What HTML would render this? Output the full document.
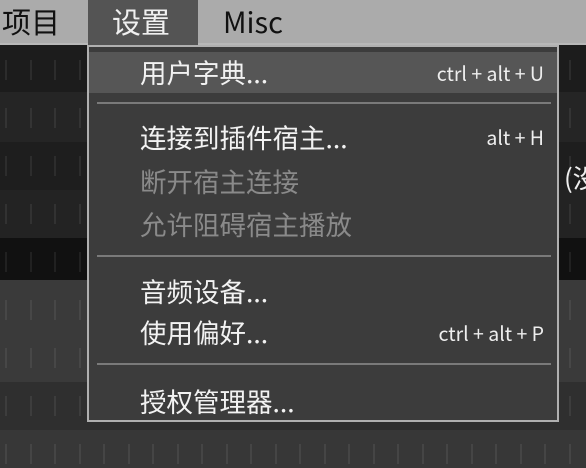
<!DOCTYPE html>
<html><head><meta charset="utf-8"><style>
*{margin:0;padding:0;box-sizing:border-box}
body{width:586px;height:468px;overflow:hidden;background:#222;position:relative;font-family:"Noto Sans CJK SC","Liberation Sans",sans-serif}
.bar{position:absolute;left:0;top:0;width:586px;height:45px;background:#ababab;border-bottom:2px solid #b8b8b8}
.bar span{position:absolute;top:2px;font-size:29px;color:#111;line-height:38px}
.tab{position:absolute;left:88px;top:0;width:110px;height:45px;background:#545454}
.row{position:absolute;left:0;width:586px}
.tk{position:absolute;width:2px;height:20px;background:rgba(255,255,255,0.07)}
.menu{position:absolute;left:87px;top:45px;width:472px;height:377px;background:#3c3c3c;border:2px solid #b0b0b0}
.it{position:absolute;left:51px;font-size:26.5px;color:#f2f2f2;line-height:30px;white-space:nowrap}
.dis{color:#8a8a8a}
.sc{position:absolute;right:13px;font-size:19.5px;color:#eee;line-height:24px}
.sep{position:absolute;left:8px;width:454px;height:2px;background:#7a7a7a}
</style></head><body>
<div class="row" style="top:45px;height:47px;background:#1c1c1c"></div>
<div class="row" style="top:92px;height:50px;background:#252525"></div>
<div class="row" style="top:142px;height:48px;background:#1e1e1e"></div>
<div class="row" style="top:190px;height:48px;background:#232323"></div>
<div class="row" style="top:238px;height:42px;background:#111"></div>
<div class="row" style="top:280px;height:102px;background:#3a3a3a"></div>
<div class="row" style="top:382px;height:48px;background:#2f2f2f"></div>
<div class="row" style="top:430px;height:38px;background:#373737"></div>
<div id="ticks"></div>
<div style="position:absolute;left:564px;top:159px;font-size:26px;color:#eee">(没</div>
<div class="bar"><div class="tab"></div>
<span style="left:2px">项目</span>
<span style="left:112px;color:#f0f0f0">设置</span>
<span style="left:223px">Misc</span></div>
<div class="menu">
<div style="position:absolute;left:0;top:5px;width:468px;height:41px;background:#565656"></div>
<div class="it" style="top:10px">用户字典...</div><div class="sc" style="top:14px">ctrl + alt + U</div>
<div class="sep" style="top:55px"></div>
<div class="it" style="top:75px">连接到插件宿主...</div><div class="sc" style="top:78px">alt + H</div>
<div class="it dis" style="top:119px">断开宿主连接</div>
<div class="it dis" style="top:162px">允许阻碍宿主播放</div>
<div class="sep" style="top:208px"></div>
<div class="it" style="top:229px">音频设备...</div>
<div class="it" style="top:270px">使用偏好...</div><div class="sc" style="top:274px">ctrl + alt + P</div>
<div class="sep" style="top:316px"></div>
<div class="it" style="top:339px">授权管理器...</div>
</div>
<script>
var t=document.getElementById('ticks'),h='';
var ys=[60,108,156,204,252,300,348,396,444];
for(var i=0;i<ys.length;i++){for(var x=5;x<586;x+=24.5){h+='<div class="tk" style="left:'+Math.round(x)+'px;top:'+ys[i]+'px"></div>';}}
t.innerHTML=h;
</script>
</body></html>
